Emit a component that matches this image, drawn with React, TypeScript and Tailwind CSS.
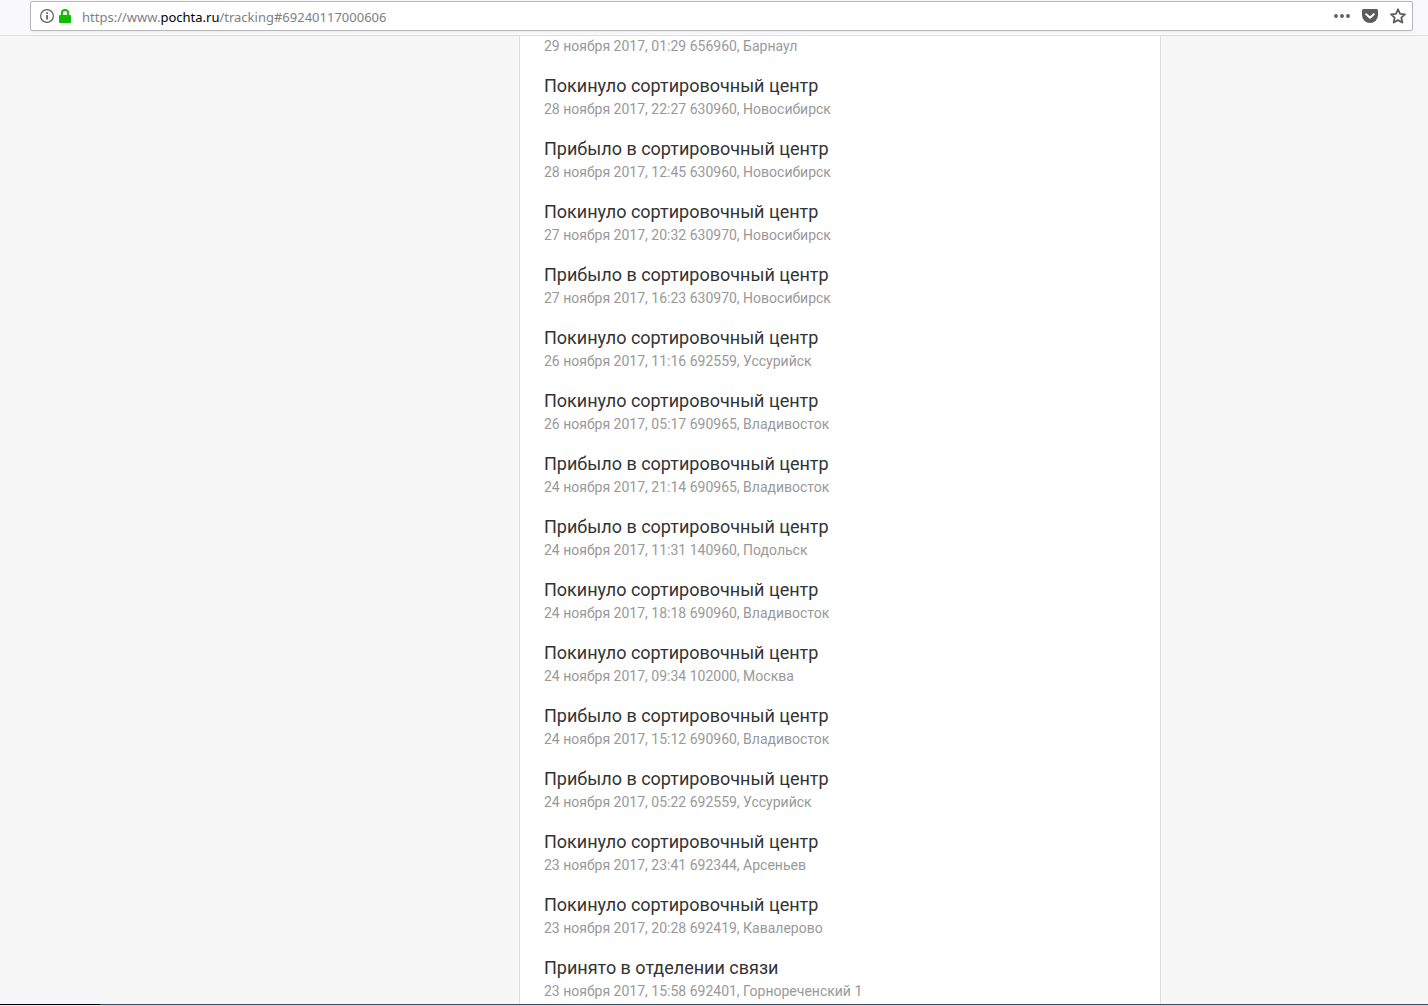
import React from 'react'

type TrackingEvent = {
    title?: string
    date: string
    place: string
}

const LEFT = 'Покинуло сортировочный центр'
const ARRIVED = 'Прибыло в сортировочный центр'

const events: TrackingEvent[] = [
    { date: '29 ноября 2017, 01:29', place: '656960, Барнаул' },
    { title: LEFT, date: '28 ноября 2017, 22:27', place: '630960, Новосибирск' },
    { title: ARRIVED, date: '28 ноября 2017, 12:45', place: '630960, Новосибирск' },
    { title: LEFT, date: '27 ноября 2017, 20:32', place: '630970, Новосибирск' },
    { title: ARRIVED, date: '27 ноября 2017, 16:23', place: '630970, Новосибирск' },
    { title: LEFT, date: '26 ноября 2017, 11:16', place: '692559, Уссурийск' },
    { title: LEFT, date: '26 ноября 2017, 05:17', place: '690965, Владивосток' },
    { title: ARRIVED, date: '24 ноября 2017, 21:14', place: '690965, Владивосток' },
    { title: ARRIVED, date: '24 ноября 2017, 11:31', place: '140960, Подольск' },
    { title: LEFT, date: '24 ноября 2017, 18:18', place: '690960, Владивосток' },
    { title: LEFT, date: '24 ноября 2017, 09:34', place: '102000, Москва' },
    { title: ARRIVED, date: '24 ноября 2017, 15:12', place: '690960, Владивосток' },
    { title: ARRIVED, date: '24 ноября 2017, 05:22', place: '692559, Уссурийск' },
    { title: LEFT, date: '23 ноября 2017, 23:41', place: '692344, Арсеньев' },
    { title: LEFT, date: '23 ноября 2017, 20:28', place: '692419, Кавалерово' },
    { title: 'Принято в отделении связи', date: '23 ноября 2017, 15:58', place: '692401, Горнореченский 1' },
]

function InfoIcon() {
    return (
        <svg className="size-4" viewBox="0 0 16 16" fill="none">
            <circle cx="8" cy="8" r="6.4" stroke="#5c5c5c" strokeWidth="1.2" />
            <rect x="7.2" y="7" width="1.7" height="4.6" fill="#5c5c5c" />
            <rect x="7.2" y="4.2" width="1.7" height="1.7" fill="#5c5c5c" />
        </svg>
    )
}

function LockIcon() {
    return (
        <svg className="size-4" viewBox="0 0 16 16" fill="none">
            <path d="M4.9 8V5a3.1 3.1 0 0 1 6.2 0v3" stroke="#12bc00" strokeWidth="2" />
            <rect x="2" y="7" width="12" height="8" rx="1" fill="#12bc00" />
        </svg>
    )
}

function DotsIcon() {
    return (
        <svg className="size-4" viewBox="0 0 16 16" fill="#5c5c5c">
            <circle cx="2" cy="8" r="1.9" />
            <circle cx="8" cy="8" r="1.9" />
            <circle cx="14" cy="8" r="1.9" />
        </svg>
    )
}

function PocketIcon() {
    return (
        <svg className="size-4" viewBox="0 0 16 16" fill="none">
            <path d="M1.6 1h12.8c.9 0 1.6.7 1.6 1.6V7a8 8 0 0 1-16 0V2.6C0 1.7.7 1 1.6 1z" fill="#5c5c5c" />
            <path d="M4.2 6.2 8 9.8l3.8-3.6" stroke="#fff" strokeWidth="2" strokeLinecap="round" strokeLinejoin="round" />
        </svg>
    )
}

function StarIcon() {
    return (
        <svg className="size-4" viewBox="0 0 16 16" fill="none">
            <path
                d="M8 1.3l2.05 4.5 4.9.55-3.65 3.3 1 4.85L8 12.1l-4.3 2.4 1-4.85-3.65-3.3 4.9-.55z"
                stroke="#5c5c5c"
                strokeWidth="1.8"
                strokeLinejoin="round"
            />
        </svg>
    )
}

function AddressBar() {
    return (
        <header className="border-b border-[#dfdfe3] bg-[#f9f9fb] pt-px pr-[15px] pb-1 pl-[30px]">
            <div className="flex h-[30px] items-center rounded-xs border border-[#b9b9bb] bg-white pr-[6px] pl-2 shadow-xs">
                <button type="button" aria-label="Сведения о сайте" className="flex gap-[2px]">
                    <InfoIcon />
                    <LockIcon />
                </button>
                <a
                    href="https://www.pochta.ru/tracking#69240117000606"
                    className="ml-[9px] flex-1 pt-[2px] font-['Noto_Sans','Open_Sans',sans-serif] text-[13px] leading-5 text-[#808080]"
                >
                    https://www.<span className="text-black">pochta.ru</span>/tracking#69240117000606
                </a>
                <div className="flex gap-3">
                    <button type="button" aria-label="Действия на странице"><DotsIcon /></button>
                    <button type="button" aria-label="Сохранить в Pocket"><PocketIcon /></button>
                    <button type="button" aria-label="Добавить в закладки"><StarIcon /></button>
                </div>
            </div>
        </header>
    )
}

function App() {
    return (
        <div className="flex min-h-screen flex-col bg-[#f7f7f7]">
            <AddressBar />
            <main className="flex flex-1 pl-[252px] font-[Roboto,sans-serif]">
                <ul className="mx-auto flex w-full max-w-[642px] flex-col gap-[18px] border-x border-[#dedede] bg-white px-6 pb-[3px]">
                    {events.map((event) => (
                        <li key={event.date}>
                            {event.title && (
                                <h2 className="mb-px text-lg leading-6 text-[#333333]">{event.title}</h2>
                            )}
                            <p className="text-sm leading-5 text-[#999999]">
                                {event.date} {event.place}
                            </p>
                        </li>
                    ))}
                </ul>
            </main>
            {/* top edge of the taskbar, start button side is darker */}
            <footer className="flex h-[2px]">
                <div className="w-[100px] border-t border-black bg-[#e6e9ee]" />
                <div className="flex-1 border-t border-[#3f4c5e] bg-[#cfd9e6]" />
            </footer>
        </div>
    )
}

export default App
